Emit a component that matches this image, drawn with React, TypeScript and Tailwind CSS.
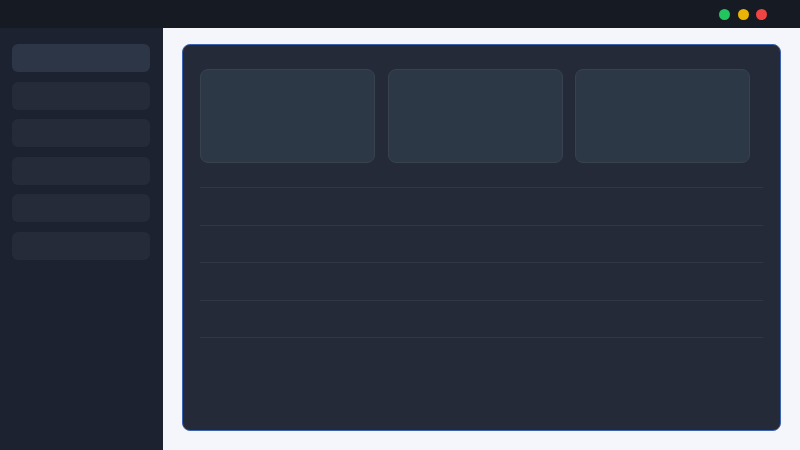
export default function App() {
  const navItems = [0, 1, 2, 3, 4, 5]
  const rows = [0, 1, 2, 3]

  return (
    <div className="w-[800px] h-[450px] flex flex-col bg-[#f4f6fb] font-['Liberation_Sans',sans-serif] overflow-hidden">
      {/* Title bar */}
      <div className="h-[28px] shrink-0 bg-[#161a22] flex items-center justify-end gap-[7.5px] pr-[33px]">
        <span className="w-[11px] h-[11px] rounded-full bg-[#22c55e]" />
        <span className="w-[11px] h-[11px] rounded-full bg-[#eab308]" />
        <span className="w-[11px] h-[11px] rounded-full bg-[#ef4444]" />
      </div>

      <div className="flex flex-1 min-h-0">
        {/* Sidebar */}
        <div className="w-[163px] shrink-0 bg-[#1d2230] pt-4 pl-3 pr-[13px] flex flex-col gap-[9.6px]">
          {navItems.map((i) => (
            <div
              key={i}
              className={`h-7 rounded-md ${i === 0 ? 'bg-[#2d3646]' : 'bg-[#252b38]'}`}
            />
          ))}
        </div>

        {/* Main */}
        <div className="flex-1 pt-4 pl-[19px] pr-[19px] pb-[19px]">
          <div className="h-full rounded-lg border-[1.5px] border-[#3d63b0] bg-[#252a38] pt-6 pl-[17px] pr-[17px]">
            <div className="flex gap-[12.5px]">
              {[0, 1, 2].map((i) => (
                <div key={i} className="w-[175px] h-[94px] rounded-lg bg-[#2d3847] border border-[#38424f]" />
              ))}
            </div>
            <div className="mt-6 border-t border-[#303746]">
              {rows.map((i) => (
                <div key={i} className="h-[37.5px] border-b border-[#303746]" />
              ))}
            </div>
          </div>
        </div>
      </div>
    </div>
  )
}
